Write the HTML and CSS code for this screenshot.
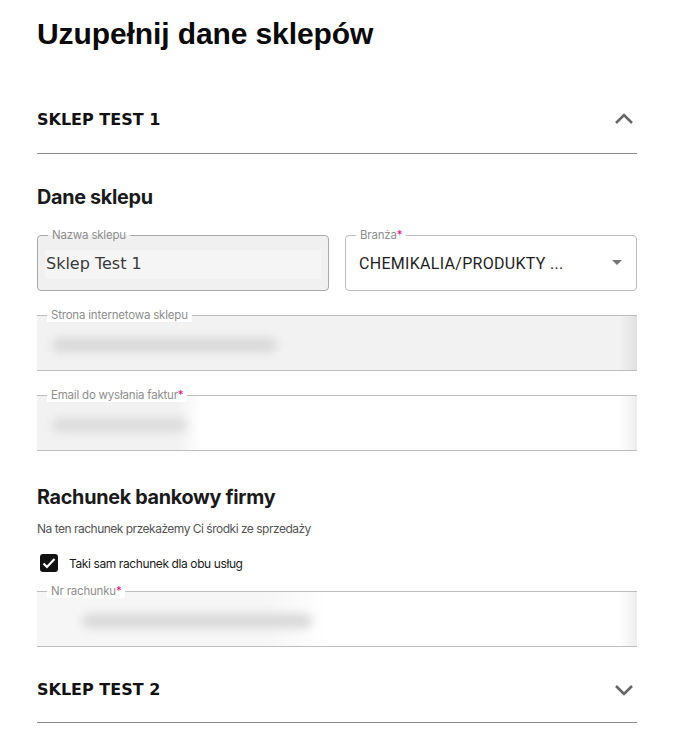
FILE: index.html
```html
<!DOCTYPE html>
<html lang="pl">
<head>
<meta charset="utf-8">
<title>Uzupełnij dane sklepów</title>
<link rel="stylesheet" href="styles.css">
</head>
<body>
<main class="page">
  <h1 class="title">Uzupełnij dane sklepów</h1>

  <section class="acc">
    <div class="acc-head">
      <span class="acc-name">SKLEP TEST 1</span>
      <svg class="chev" width="20" height="12" viewBox="0 0 20 12"><path d="M2 10 L10 2 L18 10" fill="none" stroke="#666" stroke-width="2.6"/></svg>
    </div>
    <div class="acc-body">
      <h2 class="sec">Dane sklepu</h2>
      <div class="row">
        <div class="field disabled">
          <span class="label">Nazwa sklepu</span>
          <div class="value-box">Sklep Test 1</div>
        </div>
        <div class="field select">
          <span class="label">Branża<i class="req">*</i></span>
          <div class="select-value">CHEMIKALIA/PRODUKTY ...</div>
          <svg class="caret" width="10" height="5" viewBox="0 0 10 5"><path d="M0 0 L10 0 L5 5 Z" fill="#757575"/></svg>
        </div>
      </div>
      <div class="field wide grey">
        <span class="label">Strona internetowa sklepu</span>
        <div class="blob b1"></div>
        <div class="edge"></div>
      </div>
      <div class="field wide">
        <span class="label">Email do wysłania faktur<i class="req">*</i></span>
        <div class="shade s2"></div>
        <div class="blob b2"></div>
        <div class="edge"></div>
      </div>

      <h2 class="sec sec2">Rachunek bankowy firmy</h2>
      <p class="hint">Na ten rachunek przekażemy Ci środki ze sprzedaży</p>
      <label class="check">
        <span class="box"><svg width="14" height="12" viewBox="0 0 14 12"><path d="M1.5 6.5 L5 10 L12.5 2" fill="none" stroke="#fff" stroke-width="2.2"/></svg></span>
        <span class="check-text">Taki sam rachunek dla obu usług</span>
      </label>
      <div class="field wide">
        <span class="label">Nr rachunku<i class="req">*</i></span>
        <div class="shade s3"></div>
        <div class="blob b3"></div>
        <div class="edge"></div>
      </div>
    </div>
  </section>

  <section class="acc">
    <div class="acc-head second">
      <span class="acc-name">SKLEP TEST 2</span>
      <svg class="chev" width="20" height="12" viewBox="0 0 20 12"><path d="M2 2 L10 10 L18 2" fill="none" stroke="#666" stroke-width="2.6"/></svg>
    </div>
  </section>
</main>
</body>
</html>
```

FILE: styles.css
```css
* { box-sizing: border-box; }
html, body { margin: 0; padding: 0; background: #fff; }
body { font-family: "Inter", "Liberation Sans", sans-serif; color: #111; }

.page { width: 600px; margin-left: 37px; padding-top: 13px; }

.title {
  margin: 0;
  font-family: "Liberation Sans", Arial, sans-serif;
  font-weight: 700;
  font-size: 30px;
  line-height: 42px;
  letter-spacing: -0.1px;
  color: #0a0a0a;
}

.acc-head {
  display: flex;
  align-items: center;
  justify-content: space-between;
  height: 99px;
  padding-top: 30px;
  border-bottom: 1px solid #8a8a8a;
}
.acc-head.second { height: 66px; padding-top: 0; margin-top: 10px; }
.acc-name {
  font-family: "DejaVu Sans", sans-serif;
  font-weight: 700;
  font-size: 16px;
  letter-spacing: 0;
  color: #111;
}
.chev { margin-right: 3px; }

.sec {
  margin: 30px 0 0;
  font-family: "Inter", sans-serif;
  font-weight: 700;
  font-size: 19.8px;
  line-height: 26px;
  letter-spacing: -0.3px;
  color: #1a1a1a;
}
.sec2 { margin-top: 33px; }

.row { display: flex; gap: 16px; margin-top: 25px; }

.field {
  position: relative;
  height: 56px;
  border: 1px solid #bdbdbd;
  border-radius: 4px;
  background: #fff;
}
.row .field { flex: 1; }
.field.disabled { background: #f0f0f0; border-color: #a9a9a9; }
.field.wide {
  margin-top: 24px;
  border-left: none;
  border-right: none;
  border-radius: 0;
}
.field.grey { background: #f2f2f2; }

.label {
  position: absolute;
  top: -8px;
  left: 10px;
  padding: 0 4px;
  font-size: 11.5px;
  line-height: 14px;
  color: #8e8e8e;
  letter-spacing: -0.2px;
  background: #fff;
  z-index: 1;
}
.field.disabled .label { background: linear-gradient(#fff 50%, #f0f0f0 50%); }
.req { font-style: normal; color: #e4137c; }

.value-box {
  margin: 14px 7px 0 7px;
  height: 29px;
  background: #f5f5f5;
  font-family: "DejaVu Sans", sans-serif;
  font-size: 16px;
  line-height: 27px;
  color: #3a3a3a;
  padding-left: 1px;
}

.select-value {
  padding: 18px 0 0 13px;
  font-family: "Roboto", sans-serif;
  font-size: 16px;
  line-height: 20px;
  letter-spacing: 0.3px;
  color: #1e1e1e;
}
.caret { position: absolute; right: 14px; top: 24px; }

.shade {
  position: absolute;
  left: 0; top: 0; bottom: 0;
  background: linear-gradient(90deg, #f2f2f2 85%, rgba(242,242,242,0));
}
.s2 { width: 165px; }
.s3 { width: 290px; background: linear-gradient(90deg, #f6f6f6 80%, rgba(246,246,246,0)); }

.blob {
  position: absolute;
  height: 14px;
  border-radius: 7px;
  background: #d8d8d8;
  filter: blur(5px);
}
.b1 { left: 15px; top: 22px; width: 225px; }
.b2 { left: 15px; top: 22px; width: 135px; background: #dcdcdc; }
.b3 { left: 45px; top: 22px; width: 230px; }
.edge {
  position: absolute;
  right: 0; top: 0; bottom: 0;
  width: 18px;
  background: linear-gradient(90deg, rgba(0,0,0,0), rgba(0,0,0,0.07));
}

.hint {
  margin: 11px 0 0;
  font-size: 12px;
  line-height: 16px;
  letter-spacing: -0.5px;
  color: #555;
}

.check { display: flex; align-items: center; gap: 11px; margin: 17px 0 0 3px; }
.box {
  width: 18px; height: 18px;
  border-radius: 3px;
  background: #111;
  display: flex; align-items: center; justify-content: center;
}
.check-text { font-size: 12px; letter-spacing: -0.4px; color: #1a1a1a; }
.check + .field.wide { margin-top: 19px; }
```
